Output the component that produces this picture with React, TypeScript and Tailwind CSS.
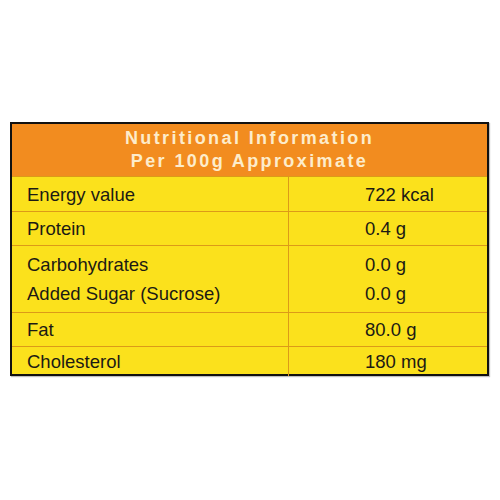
import React from 'react'

const rows = [
    { h: 'h-[35px]', items: [['Energy value', '722 kcal']] },
    { h: 'h-[34px]', items: [['Protein', '0.4 g']] },
    { h: 'h-[67px]', items: [['Carbohydrates', '0.0 g'], ['Added Sugar (Sucrose)', '0.0 g']] },
    { h: 'h-[34px]', items: [['Fat', '80.0 g']] },
    { h: 'h-[28px]', items: [['Cholesterol', '180 mg']] },
]

const App = () => {
    return (
        <div className="w-[500px] h-[500px] bg-white pt-[122px] pl-[10px] font-['Liberation_Sans',Arial,sans-serif]">
            <div className="w-[479px] border-2 border-[#111] bg-[#fbe11c] shadow-[1px_1px_1px_rgba(0,0,0,0.25)]">
                <div className="h-[52px] bg-[#f28c1f] flex flex-col items-center justify-center text-[#fdeccb] font-bold text-[18px] leading-[23px] tracking-[2.4px]">
                    <p>Nutritional Information</p>
                    <p>Per 100g Approximate</p>
                </div>
                {rows.map((row, i) => (
                    <div key={i} className={`${row.h} grid grid-cols-[277px_1fr] border-t border-[#dc9a18] text-[18.5px] text-[#1c1a14]`}>
                        <div className="border-r border-[#dc9a18] pl-[15px] flex flex-col justify-center leading-[29px]">
                            {row.items.map(([name]) => <p key={name}>{name}</p>)}
                        </div>
                        <div className="pl-[76px] flex flex-col justify-center leading-[29px]">
                            {row.items.map(([name, v]) => <p key={name}>{v}</p>)}
                        </div>
                    </div>
                ))}
            </div>
        </div>
    )
}

export default App
